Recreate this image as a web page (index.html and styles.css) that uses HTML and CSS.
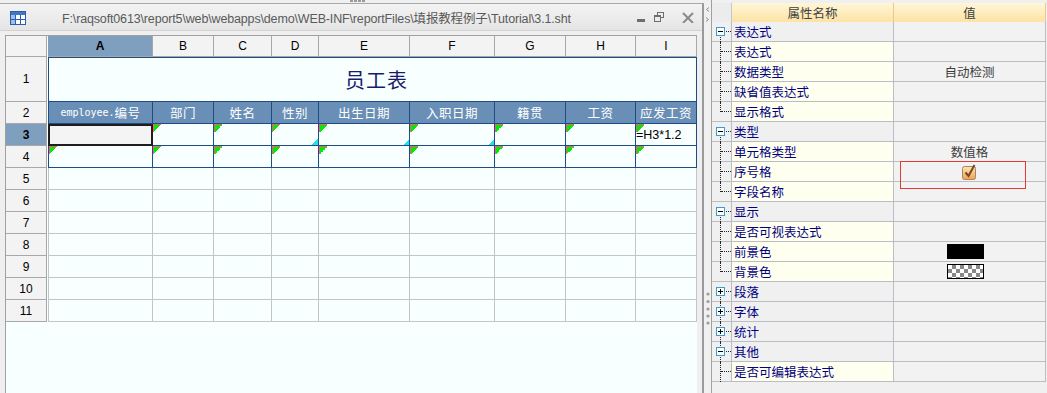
FILE: index.html
```html
<!DOCTYPE html>
<html lang="zh-CN">
<head>
  <meta charset="UTF-8" />
  <title>3.1.sht</title>
  <link rel="stylesheet" href="styles.css">
</head>
<body>
<div class="app">
  <div class="editor">
    <div class="grip"><span></span></div>
    <div class="window">
      <div class="titlebar">
        <svg class="doc-icon" width="16" height="14" viewBox="0 0 16 14">
          <rect x="0.5" y="0.5" width="15" height="13" fill="#fff" stroke="#2d5fa6"/>
          <rect x="1" y="1" width="14" height="3" fill="#3f78c2"/>
          <rect x="1" y="4" width="4" height="9" fill="#9cc0ea"/>
          <path d="M1 8.5H15M5.5 4V13M10.5 4V13" stroke="#2d5fa6"/>
        </svg>
        <span class="path">F:\raqsoft0613\report5\web\webapps\demo\WEB-INF\reportFiles\填报教程例子\Tutorial\3.1.sht</span>
        <svg class="win-btns" width="58" height="12" viewBox="0 0 58 12">
          <rect x="1" y="8" width="8" height="3" fill="#6e6e6e"/>
          <rect x="21.5" y="1.5" width="6" height="5" fill="none" stroke="#6e6e6e"/>
          <rect x="18.5" y="4.5" width="6" height="6" fill="#ececec" stroke="#6e6e6e"/>
          <rect x="18" y="4" width="7" height="2" fill="#6e6e6e"/>
          <path d="M47 2L57 12M57 2L47 12" stroke="#8a8a8a" stroke-width="2"/>
        </svg>
      </div>
      <div class="sheet-wrap">
        <div class="viewport">
          <div class="sheet">
            <div class="corner"></div>
            <div class="ch sel">A</div><div class="ch">B</div><div class="ch">C</div><div class="ch">D</div><div class="ch">E</div><div class="ch">F</div><div class="ch">G</div><div class="ch">H</div><div class="ch">I</div>

            <div class="rh">1</div>
            <div class="c b first title">员工表</div>

            <div class="rh">2</div>
            <div class="c b first hd"><span class="mono">employee.</span>编号</div>
            <div class="c b hd">部门</div><div class="c b hd">姓名</div><div class="c b hd">性别</div><div class="c b hd">出生日期</div><div class="c b hd">入职日期</div><div class="c b hd">籍贯</div><div class="c b hd">工资</div><div class="c b hd">应发工资</div>

            <div class="rh on">3</div>
            <div class="c b first cur"></div>
            <div class="c b t"></div><div class="c b t"></div><div class="c b t d"></div><div class="c b t d"></div><div class="c b t d"></div><div class="c b t"></div><div class="c b t"></div><div class="c b t f">=H3*1.2</div>

            <div class="rh">4</div>
            <div class="c b first t"></div>
            <div class="c b t"></div><div class="c b t"></div><div class="c b t"></div><div class="c b t"></div><div class="c b t"></div><div class="c b t"></div><div class="c b t"></div><div class="c b t"></div>

            <div class="rh">5</div><div class="c first"></div><div class="c"></div><div class="c"></div><div class="c"></div><div class="c"></div><div class="c"></div><div class="c"></div><div class="c"></div><div class="c"></div>
            <div class="rh">6</div><div class="c first"></div><div class="c"></div><div class="c"></div><div class="c"></div><div class="c"></div><div class="c"></div><div class="c"></div><div class="c"></div><div class="c"></div>
            <div class="rh">7</div><div class="c first"></div><div class="c"></div><div class="c"></div><div class="c"></div><div class="c"></div><div class="c"></div><div class="c"></div><div class="c"></div><div class="c"></div>
            <div class="rh">8</div><div class="c first"></div><div class="c"></div><div class="c"></div><div class="c"></div><div class="c"></div><div class="c"></div><div class="c"></div><div class="c"></div><div class="c"></div>
            <div class="rh">9</div><div class="c first"></div><div class="c"></div><div class="c"></div><div class="c"></div><div class="c"></div><div class="c"></div><div class="c"></div><div class="c"></div><div class="c"></div>
            <div class="rh">10</div><div class="c first"></div><div class="c"></div><div class="c"></div><div class="c"></div><div class="c"></div><div class="c"></div><div class="c"></div><div class="c"></div><div class="c"></div>
            <div class="rh">11</div><div class="c first"></div><div class="c"></div><div class="c"></div><div class="c"></div><div class="c"></div><div class="c"></div><div class="c"></div><div class="c"></div><div class="c"></div>
          </div>
        </div>
      </div>
    </div>
  </div>

  <div class="splitter">
    <svg class="arrows" width="5" height="16" viewBox="0 0 5 16">
      <path d="M4 0.5L1.5 2.5L4 4.5M1 10.5L3.5 12.5L1 14.5" fill="none" stroke="#8c8c8c"/>
    </svg>
    <svg class="dots" width="4" height="33" viewBox="0 0 4 33">
      <circle cx="2" cy="2" r="1.6" fill="#9c9c9c"/>
      <circle cx="2" cy="9.5" r="1.6" fill="#9c9c9c"/>
      <circle cx="2" cy="17" r="1.6" fill="#9c9c9c"/>
      <circle cx="2" cy="24" r="1.6" fill="#9c9c9c"/>
      <circle cx="2" cy="31" r="1.6" fill="#9c9c9c"/>
    </svg>
  </div>

  <div class="props">
    <div class="phead"><div class="tc"></div><div>属性名称</div><div>值</div></div>

    <div class="prow grp"><div class="tr"><i class="h"></i><i class="vb"></i><i class="box"></i></div><div class="nm">表达式</div><div class="vl"></div></div>
    <div class="prow"><div class="tr"><i class="v"></i><i class="h"></i></div><div class="nm">表达式</div><div class="vl"></div></div>
    <div class="prow"><div class="tr"><i class="v"></i><i class="h"></i></div><div class="nm">数据类型</div><div class="vl">自动检测</div></div>
    <div class="prow"><div class="tr"><i class="v"></i><i class="h"></i></div><div class="nm">缺省值表达式</div><div class="vl"></div></div>
    <div class="prow"><div class="tr"><i class="vt"></i><i class="h"></i></div><div class="nm">显示格式</div><div class="vl"></div></div>

    <div class="prow grp"><div class="tr"><i class="h"></i><i class="vb"></i><i class="box"></i></div><div class="nm">类型</div><div class="vl"></div></div>
    <div class="prow"><div class="tr"><i class="v"></i><i class="h"></i></div><div class="nm">单元格类型</div><div class="vl">数值格</div></div>
    <div class="prow"><div class="tr"><i class="v"></i><i class="h"></i></div><div class="nm">序号格</div>
      <div class="vl">
        <svg width="15" height="16" viewBox="0 0 15 16">
          <defs>
            <linearGradient id="cb" x1="0" y1="0" x2="0" y2="1">
              <stop offset="0" stop-color="#ffe4b0"/>
              <stop offset="1" stop-color="#f3a24a"/>
            </linearGradient>
          </defs>
          <rect x="0.5" y="2.5" width="13" height="13" rx="2" fill="url(#cb)" stroke="#a3866a"/>
          <path d="M3.5 8.5L6.5 12L12.5 1" fill="none" stroke="#76472a" stroke-width="2"/>
        </svg>
      </div>
    </div>
    <div class="prow"><div class="tr"><i class="vt"></i><i class="h"></i></div><div class="nm">字段名称</div><div class="vl"></div></div>

    <div class="prow grp"><div class="tr"><i class="h"></i><i class="vb"></i><i class="box"></i></div><div class="nm">显示</div><div class="vl"></div></div>
    <div class="prow"><div class="tr"><i class="v"></i><i class="h"></i></div><div class="nm">是否可视表达式</div><div class="vl"></div></div>
    <div class="prow"><div class="tr"><i class="v"></i><i class="h"></i></div><div class="nm">前景色</div><div class="vl"><span class="swatch fg"></span></div></div>
    <div class="prow"><div class="tr"><i class="vt"></i><i class="h"></i></div><div class="nm">背景色</div><div class="vl"><span class="swatch bg"></span></div></div>

    <div class="prow grp"><div class="tr"><i class="h"></i><i class="vb"></i><i class="box plus"></i></div><div class="nm">段落</div><div class="vl"></div></div>
    <div class="prow grp"><div class="tr"><i class="v"></i><i class="h"></i><i class="box plus"></i></div><div class="nm">字体</div><div class="vl"></div></div>
    <div class="prow grp"><div class="tr"><i class="v"></i><i class="h"></i><i class="box plus"></i></div><div class="nm">统计</div><div class="vl"></div></div>
    <div class="prow grp"><div class="tr"><i class="v"></i><i class="h"></i><i class="box"></i></div><div class="nm">其他</div><div class="vl"></div></div>
    <div class="prow"><div class="tr"><i class="v"></i><i class="h"></i></div><div class="nm">是否可编辑表达式</div><div class="vl"></div></div>

    <div class="mark"></div>
  </div>
</div>
</body>
</html>
```

FILE: styles.css
```css
* {
  box-sizing: border-box;
}
body {
  margin: 0;
  background: #f0f0f0;
  font-family: "Liberation Sans", "Noto Sans CJK SC", sans-serif;
  font-size: 12px;
  color: #000;
}
.app {
  display: flex;
  width: 1047px;
  height: 393px;
  overflow: hidden;
}

/* left: report editor window */
.editor {
  width: 704px;
  display: flex;
  flex-direction: column;
}
.grip {
  height: 3px;
  display: flex;
  justify-content: center;
}
.grip span {
  width: 16px;
  height: 2px;
  margin-left: 12px;
  background: repeating-linear-gradient(90deg, #9a9a9a 0 3px, transparent 3px 4px);
}
.window {
  flex: 1;
  min-height: 0;
  display: flex;
  flex-direction: column;
  border-top: 1px solid #a8a8a8;
  border-right: 2px solid #9a9a9a;
  background: #efefef;
}
.titlebar {
  height: 27px;
  display: flex;
  align-items: center;
  padding-left: 10px;
  border-bottom: 1px solid #d2d2d2;
  background: linear-gradient(#f3f3f3, #e5e5e5);
}
.doc-icon {
  margin-top: 2px;
}
.path {
  flex: 1;
  margin-left: 36px;
  font-size: 12.5px;
  letter-spacing: -0.15px;
  color: #5a5a5a;
  white-space: nowrap;
}
.win-btns {
  margin-right: 8px;
}
.sheet-wrap {
  flex: 1;
  min-height: 0;
  padding: 4px 0 0 5px;
}
.viewport {
  width: 692px;
  height: 100%;
  overflow: hidden;
  border-left: 1px solid #a0a0a0;
  border-top: 1px solid #a0a0a0;
  background: #f8ffff;
}
.sheet {
  display: grid;
  grid-template-columns: 42px 105px 61px 58px 47px 91px 85px 71px 70px 61px;
  grid-template-rows: 21px 45px repeat(10, 22px);
}
.corner, .ch, .rh {
  display: flex;
  align-items: center;
  justify-content: center;
  background: #f3f3f3;
  border-right: 1px solid #a8a8a8;
  border-bottom: 1px solid #a8a8a8;
  font-size: 12px;
}
.corner, .rh {
  margin-right: 1px;
}
.ch.sel, .rh.on {
  background: #7f9fbf;
  font-weight: bold;
}
.c {
  position: relative;
  border-right: 1px solid #c4c4c4;
  border-bottom: 1px solid #c4c4c4;
}
.c.first {
  border-left: 1px solid #c4c4c4;
}
.c.b {
  border-color: #1d4c88;
}
.title {
  grid-column: span 9;
  border-top: 1px solid #1d4c88;
  display: flex;
  align-items: center;
  justify-content: center;
  padding-left: 8px;
  font-family: "Noto Sans CJK SC", sans-serif;
  font-size: 20px;
  letter-spacing: 1px;
  color: #1a1a6c;
}
.hd {
  display: flex;
  align-items: center;
  justify-content: center;
  background: #6a8fb7;
  color: #fff;
  font-family: "Noto Sans CJK SC", sans-serif;
  font-size: 12.5px;
  letter-spacing: 0.5px;
}
.mono {
  font-family: "DejaVu Sans Mono", monospace;
  font-size: 10px;
  letter-spacing: 0;
}
.cur {
  background: #f4f4f4;
  outline: 2px solid #1e1e1e;
  outline-offset: -2px;
}
.f {
  display: flex;
  align-items: center;
  font-size: 12.5px;
}
.t::before {
  content: "";
  position: absolute;
  top: 0;
  left: 0;
  width: 7px;
  height: 7px;
  border-top: 1px solid #f0607a;
  border-left: 1px solid #f0607a;
  background: linear-gradient(135deg, #00ec00 50%, transparent 50%);
}
.d::after {
  content: "";
  position: absolute;
  right: 0;
  bottom: 0;
  width: 6px;
  height: 6px;
  background: linear-gradient(to top left, #1ee2f0 50%, transparent 50%);
}

/* splitter */
.splitter {
  width: 8px;
  display: flex;
  flex-direction: column;
  align-items: center;
  border-right: 1px solid #a0a0a0;
}
.arrows {
  margin-top: 7px;
}
.dots {
  margin-top: 269px;
}

/* right: property grid */
.props {
  width: 335px;
  position: relative;
  font-family: "Noto Sans CJK SC", sans-serif;
}
.phead, .prow {
  display: grid;
  grid-template-columns: 20px 162px 152px;
}
.phead {
  margin-top: 3px;
  height: 19px;
}
.phead div {
  display: flex;
  align-items: center;
  justify-content: center;
  border-right: 1px solid #ecc88c;
  border-bottom: 1px solid #e2c286;
  background: linear-gradient(#fff6d8, #fde3a4);
  color: #404040;
  font-size: 12.5px;
}
.phead .tc {
  background: #ececec;
  border-color: #c4c8cc;
}
.prow {
  height: 20px;
}
.prow > div {
  border-right: 1px solid #b9bec5;
  border-bottom: 1px solid #b9bec5;
}
.tr {
  position: relative;
  background: #f0f0f0;
}
.nm {
  display: flex;
  align-items: center;
  padding-left: 2px;
  background: #fffff0;
  color: #000080;
  font-size: 12.5px;
}
.grp .nm {
  background: #f0f0f0;
}
.vl {
  display: flex;
  align-items: center;
  justify-content: center;
  background: #f2f2f2;
  color: #3c3c3c;
  font-size: 12.5px;
}
.tr i {
  position: absolute;
  display: block;
}
.v {
  left: 8px;
  top: 0;
  bottom: -1px;
  border-left: 1px dotted #222;
}
.vt {
  left: 8px;
  top: 0;
  height: 10px;
  border-left: 1px dotted #222;
}
.vb {
  left: 8px;
  top: 9px;
  bottom: -1px;
  border-left: 1px dotted #222;
}
.h {
  left: 9px;
  right: 0;
  top: 9px;
  border-top: 1px dotted #222;
}
.tr .box {
  left: 4px;
  top: 5px;
  width: 9px;
  height: 9px;
  border: 1px solid #3c9bd0;
  background: #fff;
}
.box::before {
  content: "";
  position: absolute;
  left: 1px;
  top: 3px;
  width: 5px;
  height: 1px;
  background: #000;
}
.box.plus::after {
  content: "";
  position: absolute;
  left: 3px;
  top: 1px;
  width: 1px;
  height: 5px;
  background: #000;
}
.swatch {
  width: 37px;
  height: 15px;
  margin-right: 8px;
  border: 1px solid #000;
}
.swatch.fg {
  background: #000;
}
.swatch.bg {
  background: conic-gradient(#888 90deg, #fff 90deg 180deg, #888 180deg 270deg, #fff 270deg) 0 0 / 8px 8px;
}
.mark {
  position: absolute;
  left: 188px;
  top: 161px;
  width: 126px;
  height: 28px;
  border: 1px solid #e53935;
}
```
